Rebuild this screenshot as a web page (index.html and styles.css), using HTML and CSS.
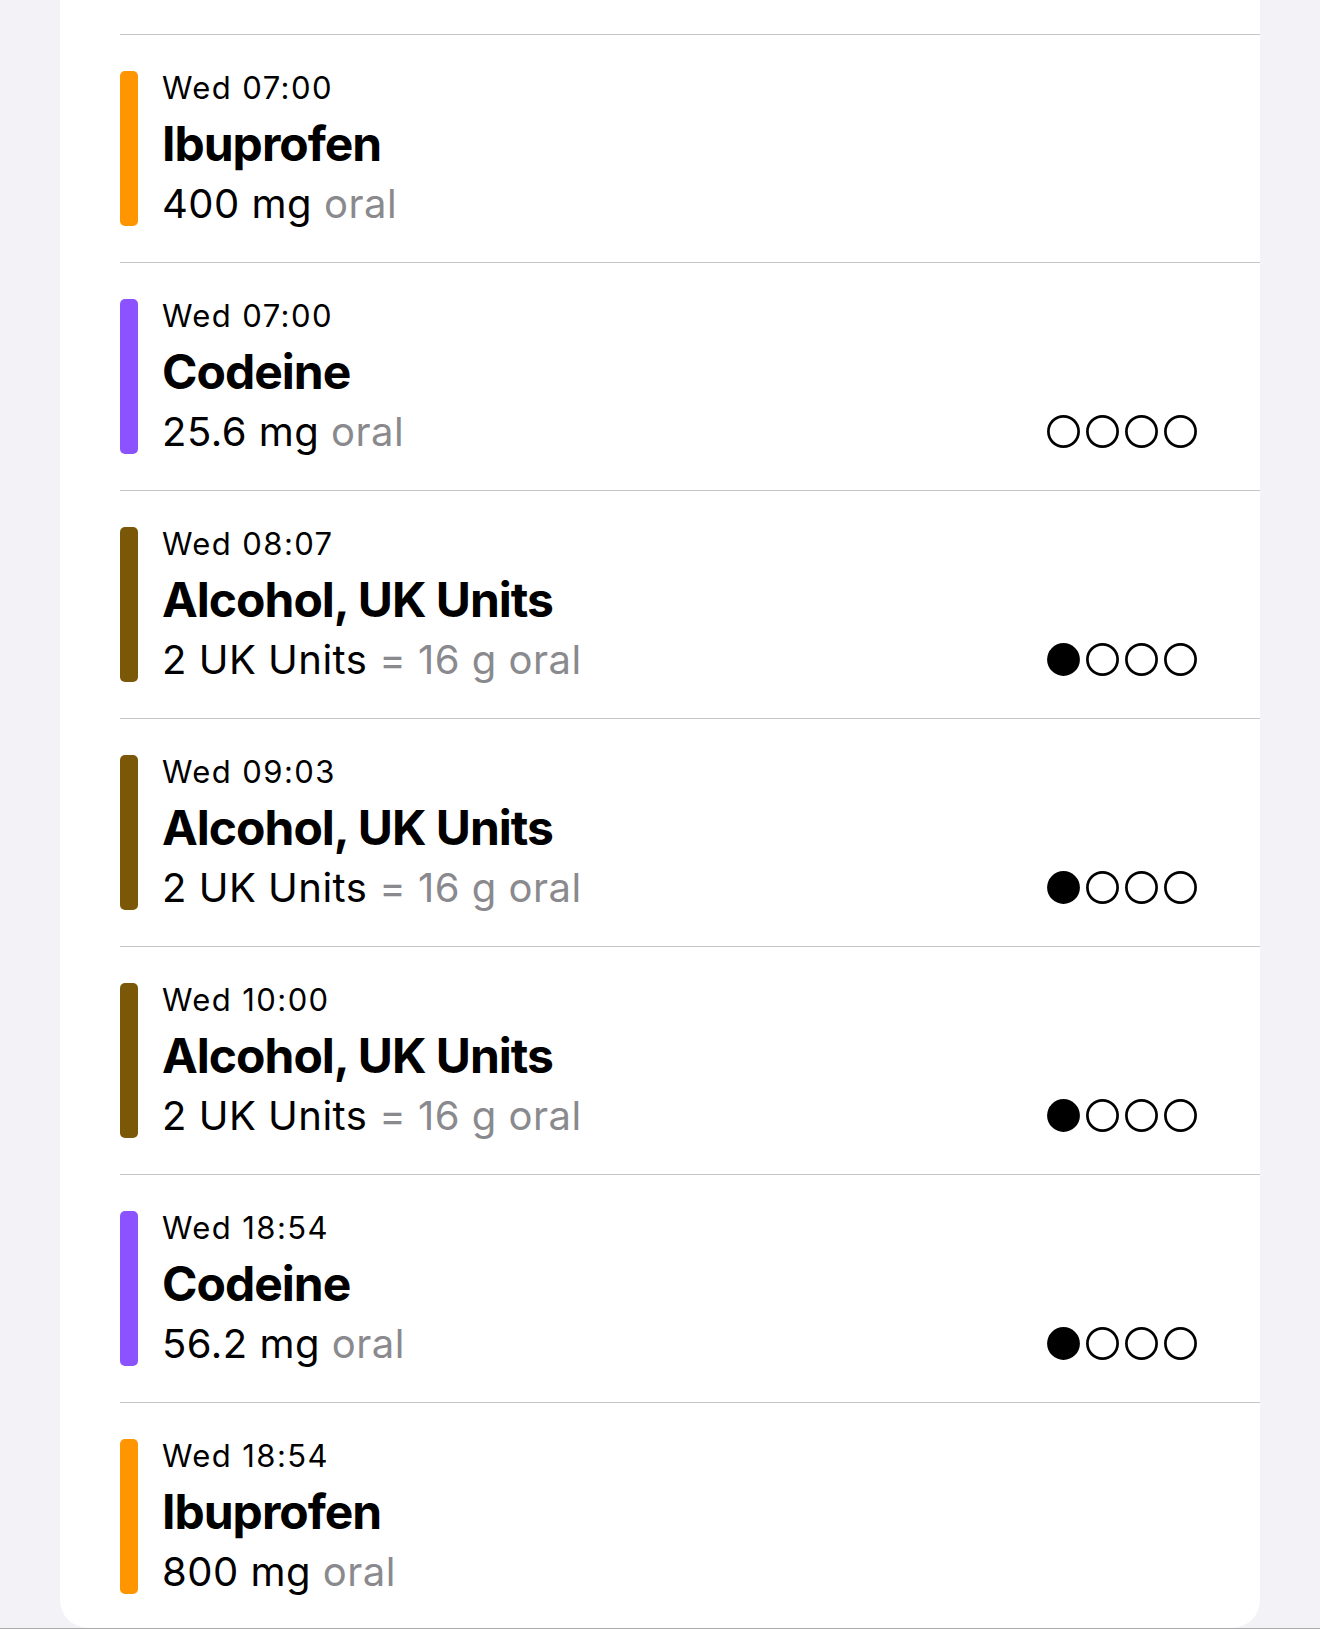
FILE: index.html
```html
<!DOCTYPE html>
<html lang="en">
<head>
<meta charset="utf-8">
<title>Doses</title>
<link rel="stylesheet" href="styles.css">
</head>
<body>
<div class="screen">
  <div class="card">
    <div class="row">
      <div class="bar orange"></div>
      <div class="info">
        <div class="time">Wed 07:00</div>
        <div class="name">Ibuprofen</div>
        <div class="dose">400 mg <span class="muted">oral</span></div>
      </div>
    </div>
    <div class="row">
      <div class="bar purple"></div>
      <div class="info">
        <div class="time">Wed 07:00</div>
        <div class="name">Codeine</div>
        <div class="dose">25.6 mg <span class="muted">oral</span></div>
      </div>
      <div class="dots">
        <svg class="dot" viewBox="0 0 33 33"><circle cx="16.5" cy="16.5" r="15.1" class="ring"/></svg>
        <svg class="dot" viewBox="0 0 33 33"><circle cx="16.5" cy="16.5" r="15.1" class="ring"/></svg>
        <svg class="dot" viewBox="0 0 33 33"><circle cx="16.5" cy="16.5" r="15.1" class="ring"/></svg>
        <svg class="dot" viewBox="0 0 33 33"><circle cx="16.5" cy="16.5" r="15.1" class="ring"/></svg>
      </div>
    </div>
    <div class="row">
      <div class="bar brown"></div>
      <div class="info">
        <div class="time">Wed 08:07</div>
        <div class="name">Alcohol, UK Units</div>
        <div class="dose">2 UK Units <span class="muted">= 16 g oral</span></div>
      </div>
      <div class="dots">
        <svg class="dot" viewBox="0 0 33 33"><circle cx="16.5" cy="16.5" r="16.4" class="fill"/></svg>
        <svg class="dot" viewBox="0 0 33 33"><circle cx="16.5" cy="16.5" r="15.1" class="ring"/></svg>
        <svg class="dot" viewBox="0 0 33 33"><circle cx="16.5" cy="16.5" r="15.1" class="ring"/></svg>
        <svg class="dot" viewBox="0 0 33 33"><circle cx="16.5" cy="16.5" r="15.1" class="ring"/></svg>
      </div>
    </div>
    <div class="row">
      <div class="bar brown"></div>
      <div class="info">
        <div class="time">Wed 09:03</div>
        <div class="name">Alcohol, UK Units</div>
        <div class="dose">2 UK Units <span class="muted">= 16 g oral</span></div>
      </div>
      <div class="dots">
        <svg class="dot" viewBox="0 0 33 33"><circle cx="16.5" cy="16.5" r="16.4" class="fill"/></svg>
        <svg class="dot" viewBox="0 0 33 33"><circle cx="16.5" cy="16.5" r="15.1" class="ring"/></svg>
        <svg class="dot" viewBox="0 0 33 33"><circle cx="16.5" cy="16.5" r="15.1" class="ring"/></svg>
        <svg class="dot" viewBox="0 0 33 33"><circle cx="16.5" cy="16.5" r="15.1" class="ring"/></svg>
      </div>
    </div>
    <div class="row">
      <div class="bar brown"></div>
      <div class="info">
        <div class="time">Wed 10:00</div>
        <div class="name">Alcohol, UK Units</div>
        <div class="dose">2 UK Units <span class="muted">= 16 g oral</span></div>
      </div>
      <div class="dots">
        <svg class="dot" viewBox="0 0 33 33"><circle cx="16.5" cy="16.5" r="16.4" class="fill"/></svg>
        <svg class="dot" viewBox="0 0 33 33"><circle cx="16.5" cy="16.5" r="15.1" class="ring"/></svg>
        <svg class="dot" viewBox="0 0 33 33"><circle cx="16.5" cy="16.5" r="15.1" class="ring"/></svg>
        <svg class="dot" viewBox="0 0 33 33"><circle cx="16.5" cy="16.5" r="15.1" class="ring"/></svg>
      </div>
    </div>
    <div class="row">
      <div class="bar purple"></div>
      <div class="info">
        <div class="time">Wed 18:54</div>
        <div class="name">Codeine</div>
        <div class="dose">56.2 mg <span class="muted">oral</span></div>
      </div>
      <div class="dots">
        <svg class="dot" viewBox="0 0 33 33"><circle cx="16.5" cy="16.5" r="16.4" class="fill"/></svg>
        <svg class="dot" viewBox="0 0 33 33"><circle cx="16.5" cy="16.5" r="15.1" class="ring"/></svg>
        <svg class="dot" viewBox="0 0 33 33"><circle cx="16.5" cy="16.5" r="15.1" class="ring"/></svg>
        <svg class="dot" viewBox="0 0 33 33"><circle cx="16.5" cy="16.5" r="15.1" class="ring"/></svg>
      </div>
    </div>
    <div class="row">
      <div class="bar orange"></div>
      <div class="info">
        <div class="time">Wed 18:54</div>
        <div class="name">Ibuprofen</div>
        <div class="dose">800 mg <span class="muted">oral</span></div>
      </div>
    </div>
  </div>
</div>
</body>
</html>
```
FILE: styles.css
```css
html, body {
  margin: 0;
  padding: 0;
}
body {
  background: #f2f2f7;
  font-family: Inter, "Noto Sans", "Liberation Sans", sans-serif;
  color: #000;
  overflow: hidden;
}
.screen {
  height: 1628px;
  padding: 0 60px;
  border-bottom: 1px solid #ababab;
}
.card {
  background: #fff;
  height: 1628px;
  box-sizing: border-box;
  padding: 34px 0 0 60px;
  border-radius: 0 0 28px 28px;
  overflow: hidden;
}
.row {
  display: flex;
  border-top: 1px solid #c6c6c8;
  padding: 36px 0;
}
.bar {
  width: 18px;
  border-radius: 5px;
  flex: none;
}
.orange { background: #ff9500; }
.purple { background: #8c52ff; }
.brown { background: #7b5807; }
.info {
  flex: 1;
  margin-left: 24px;
  display: flex;
  flex-direction: column;
}
.time {
  font-size: 31px;
  line-height: 34px;
  letter-spacing: 1.4px;
}
.name {
  font-size: 48px;
  font-weight: 700;
  line-height: 58px;
  margin-top: 10px;
  letter-spacing: -1px;
}
.dose {
  font-size: 40px;
  line-height: 45px;
  margin-top: 8px;
  letter-spacing: 0.5px;
}
.muted {
  color: #8a8a8e;
}
.dots {
  display: flex;
  gap: 6px;
  align-self: flex-end;
  margin: 0 63px 6px 0;
}
.dot {
  width: 33px;
  height: 33px;
  display: block;
}
.ring {
  fill: none;
  stroke: #000;
  stroke-width: 2.7;
}
.fill {
  fill: #000;
}
```
